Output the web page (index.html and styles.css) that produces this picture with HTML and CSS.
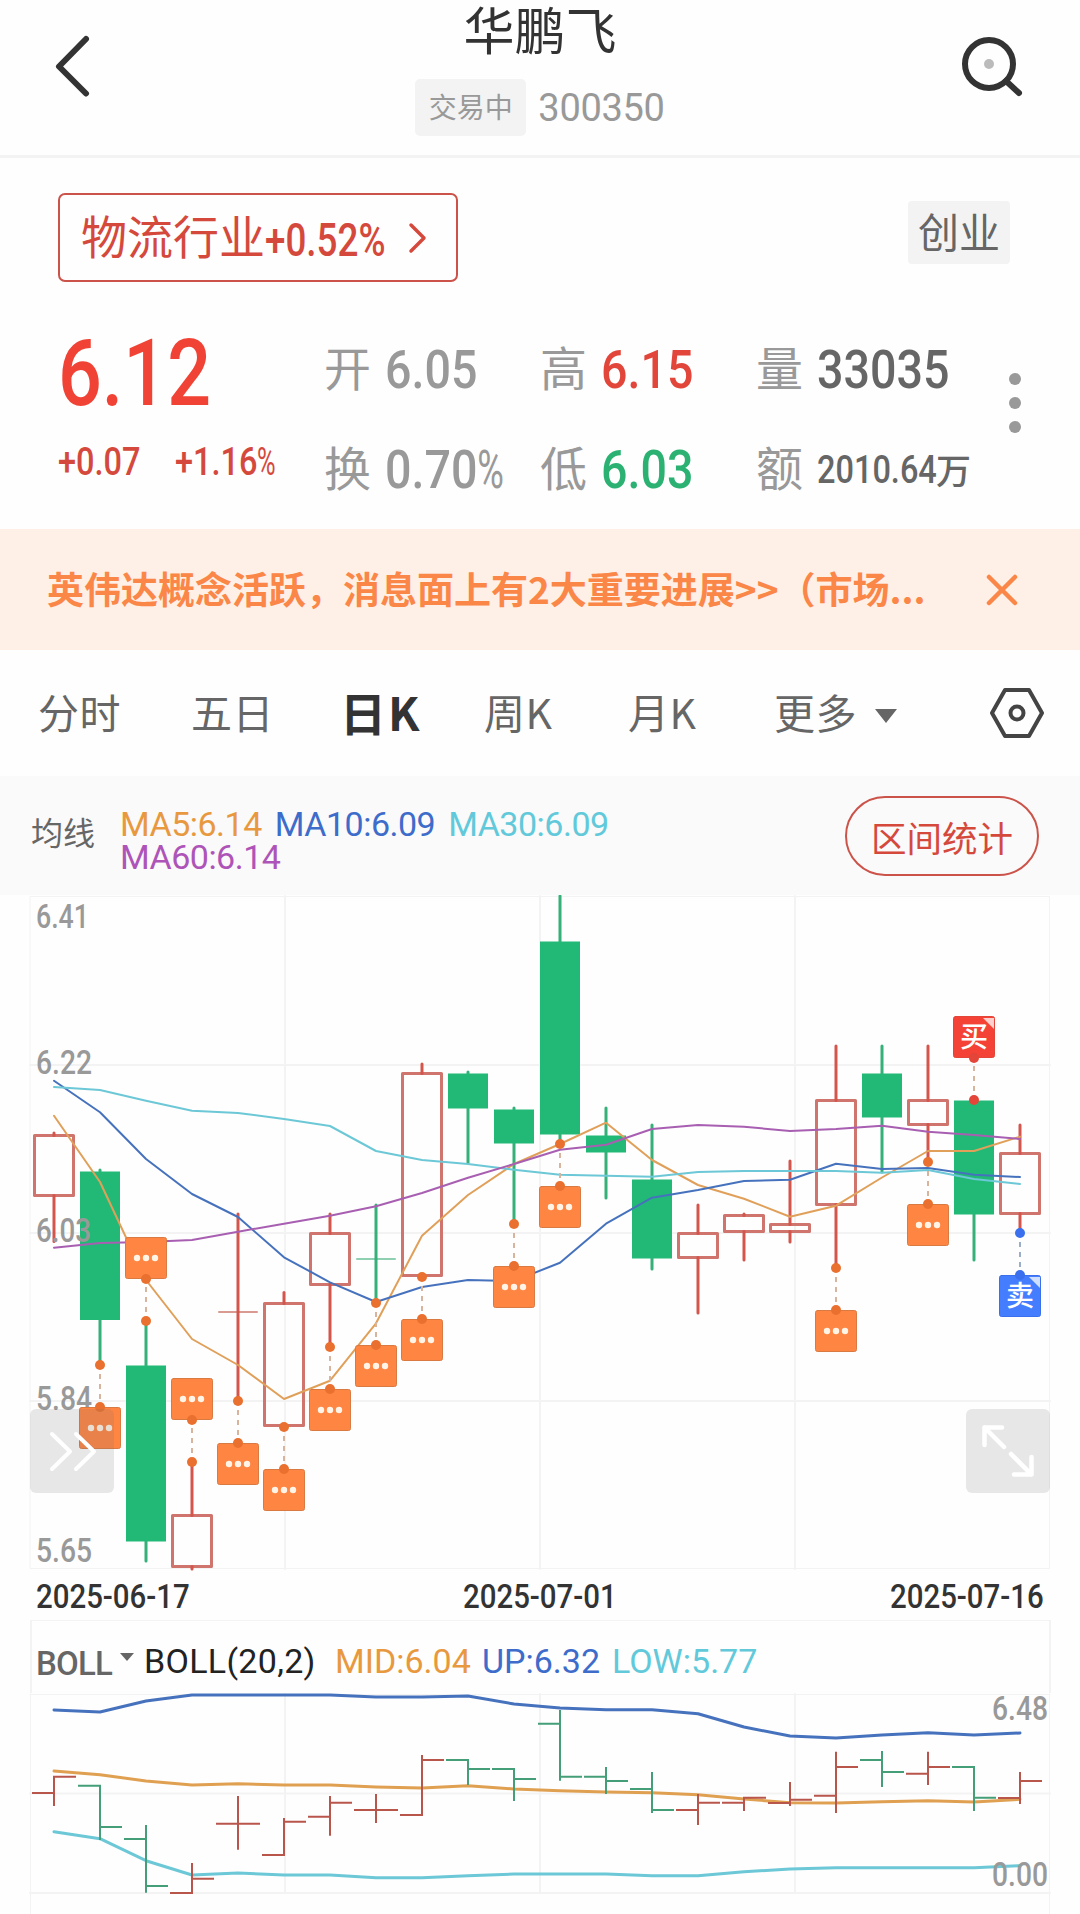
FILE: index.html
```html
<!DOCTYPE html>
<html lang="zh-CN">
<head>
    <meta charset="UTF-8">
    <meta name="viewport" content="width=device-width, initial-scale=1.0">
    <title>华鹏飞 300350</title>
    <link rel="stylesheet" href="styles.css">
</head>
<body>
<header class="header">
    <svg class="back" width="44" height="66" viewBox="0 0 44 66"><path d="M36 8 L9 35.5 L36 62.500"/></svg>
    <div class="title">
        <h1>华鹏飞</h1>
        <div class="sub"><span class="status">交易中</span><span class="code">300350</span></div>
    </div>
    <svg class="search" width="66" height="66" viewBox="0 0 66 66">
        <circle class="ring" cx="29" cy="33" r="24"/>
        <circle class="dot" cx="29" cy="33" r="5"/>
        <path d="M46 50 L59 62"/>
    </svg>
</header>

<section class="quote">
    <div class="tags">
        <a class="industry">
            <span>物流行业</span><span class="num">+0.52%</span>
            <svg width="20" height="32" viewBox="0 0 20 32"><path d="M3 3 L16 16 L3 29"/></svg>
        </a>
        <span class="board">创业</span>
    </div>
    <div class="figures">
        <div class="price num">6.12</div>
        <div class="item"><label>开</label><span class="num">6.05</span></div>
        <div class="item"><label>高</label><span class="num up">6.15</span></div>
        <div class="item"><label>量</label><span class="num dark">33035</span></div>
        <div class="change"><span class="num">+0.07</span><span class="num">+1.16<em>%</em></span></div>
        <div class="item"><label>换</label><span class="num">0.70<em>%</em></span></div>
        <div class="item"><label>低</label><span class="num down">6.03</span></div>
        <div class="item"><label>额</label><span class="num dark small">2010.64</span><b>万</b></div>
        <div class="more"><i></i><i></i><i></i></div>
    </div>
</section>

<div class="notice">
    <span>英伟达概念活跃，消息面上有2大重要进展&gt;&gt;（市场...</span>
    <svg width="32" height="32" viewBox="0 0 32 32"><path d="M3 3 L29 29 M29 3 L3 29"/></svg>
</div>

<nav class="tabs">
    <a>分时</a>
    <a>五日</a>
    <a class="active">日K</a>
    <a>周K</a>
    <a>月K</a>
    <a>更多<i class="arrow"></i></a>
    <svg width="58" height="54" viewBox="0 0 58 54">
        <path d="M17 4 H41 L54 27 L41 50 H17 L4 27 Z"/>
        <circle cx="29" cy="27" r="6.5"/>
    </svg>
</nav>

<div class="legend">
    <span class="name">均线</span>
    <div class="mas">
        <span class="ma5">MA5:6.14</span>
        <span class="ma10">MA10:6.09</span>
        <span class="ma30">MA30:6.09</span>
        <span class="ma60">MA60:6.14</span>
    </div>
    <button>区间统计</button>
</div>

<div class="chart">
    <svg id="kline" width="1080" height="676" viewBox="0 895 1080 676"></svg>
    <button class="tool left">
        <svg width="84" height="84" viewBox="0 0 84 84"><path d="M22 25 L40 42.500 L22 60 M46 25 L64 42.500 L46 60"/></svg>
    </button>
    <button class="tool right">
        <svg width="84" height="84" viewBox="0 0 84 84"><path d="M38 38 L18.500 18.500 M36 18.500 H18.500 V36 M45 45 L65.500 65.500 M48 65.500 H65.500 V48"/></svg>
    </button>
</div>
<div class="dates"><span class="num">2025-06-17</span><span class="num">2025-07-01</span><span class="num">2025-07-16</span></div>

<div class="boll">
    <div class="boll-head">
        <span class="pick">BOLL</span><i class="arrow"></i>
        <span class="param">BOLL(20,2)</span>
        <span class="mid">MID:6.04</span>
        <span class="upper">UP:6.32</span>
        <span class="low">LOW:5.77</span>
    </div>
    <svg id="boll" width="1080" height="221" viewBox="0 1693 1080 221"></svg>
</div>
<script src="chart.js"></script>
</body>
</html>
```

FILE: styles.css
```css
* {
    box-sizing: border-box;
}

body {
    margin: 0;
    width: 1080px;
    height: 1914px;
    overflow: hidden;
    background-color: #fefefe;
    font-family: "Noto Sans CJK SC", sans-serif;
    color: #666;
}

svg {
    display: block;
    fill: none;
    stroke-linecap: round;
    stroke-linejoin: round;
}

button {
    font-family: inherit;
    padding: 0;
}

/* narrow digits */
.num {
    display: inline-block;
    font-family: Roboto, sans-serif;
    font-weight: 500;
    transform: scaleX(0.855);
    transform-origin: left center;
    white-space: nowrap;
}

.num em {
    display: inline-block;
    font-style: normal;
    font-weight: 400;
    transform: scaleX(0.78);
    transform-origin: left center;
}

.header {
    height: 158px;
    border-bottom: 3px solid #f3f3f3;
    display: flex;
    justify-content: space-between;
    padding: 31px 54px 0 50px;
    color: #333;
}

.back {
    stroke: #333;
    stroke-width: 6;
}

.search {
    stroke: #333;
    stroke-width: 6;
}

.search .dot {
    fill: #bbb;
    stroke: none;
}

.title {
    margin-top: -31px;
    margin-left: 26px;
}

.title h1 {
    margin: 0;
    padding-top: 1px;
    font-size: 51px;
    font-weight: 400;
    line-height: 54px;
    text-align: center;
}

.sub {
    display: flex;
    align-items: center;
    gap: 12px;
    margin-top: 24px;
    color: #999;
}

.status {
    width: 111px;
    height: 57px;
    line-height: 55px;
    font-size: 28px;
    text-align: center;
    background-color: #f3f3f3;
    border-radius: 5px;
}

.code {
    font-family: Roboto, sans-serif;
    font-size: 38px;
    letter-spacing: -0.3px;
}

.quote {
    height: 371px;
    padding: 35px 70px 0 58px;
}

.tags {
    display: flex;
    justify-content: space-between;
    align-items: flex-start;
}

.industry {
    width: 400px;
    height: 89px;
    padding-left: 21px;
    border: 2px solid #cb5349;
    border-radius: 7px;
    display: flex;
    align-items: center;
    font-size: 46px;
    line-height: 78px;
    color: #d5493d;
}

.industry span:first-child {
    height: 85px;
}

.industry .num {
    width: 143px;
    font-size: 46px;
    transform: scaleX(0.8);
    padding-top: 4px;
}

.industry svg {
    stroke: #d5493d;
    stroke-width: 3.5;
}

.board {
    width: 102px;
    height: 63px;
    margin-top: 8px;
    line-height: 58px;
    font-size: 41px;
    text-align: center;
    background-color: #f3f3f3;
    border-radius: 4px;
}

.figures {
    position: relative;
    display: grid;
    grid-template-columns: 266px 216px 216px 240px;
    grid-template-rows: 98px 102px;
    margin-top: 38px;
    align-items: center;
}

.price {
    padding-top: 10px;
    font-size: 93px;
    line-height: 98px;
    color: #f14335;
    transform: scaleX(0.83);
}

.item {
    display: flex;
    align-items: center;
    font-size: 47px;
    line-height: 60px;
}

.item label {
    width: 61px;
    padding-bottom: 6px;
    color: #999;
}

.item .num {
    font-size: 54.5px;
    color: #999;
}

.item .up {
    color: #e2463a;
}

.item .down {
    color: #2bb273;
}

.item .dark {
    color: #666;
}

.item .small {
    width: 119px;
    padding-top: 2px;
    font-size: 38px;
}

.item b {
    font-size: 35px;
    font-weight: 500;
}

.change {
    display: flex;
    font-size: 38px;
    color: #d5493d;
}

.change span {
    width: 117px;
    margin-top: -15px;
}

.more {
    position: absolute;
    left: 951px;
    top: 53px;
}

.more i {
    display: block;
    width: 12px;
    height: 12px;
    margin-bottom: 12px;
    border-radius: 50%;
    background-color: #999;
}

.notice {
    height: 121px;
    padding: 0 62px 0 47px;
    display: flex;
    justify-content: space-between;
    align-items: center;
    background-color: #fff0e7;
    color: #fa8748;
    font-size: 37px;
    font-weight: 700;
}

.notice span {
    padding-bottom: 3px;
}

.notice svg {
    stroke: #fa8748;
    stroke-width: 4.5;
}

.tabs {
    height: 126px;
    padding: 0 34px 0 38px;
    display: grid;
    grid-template-columns: 153px 149px 144px 144px 146px 1fr auto;
    align-items: center;
    font-size: 41px;
}

.tabs a {
    padding-bottom: 5px;
    letter-spacing: 0.5px;
}

.tabs .active {
    font-size: 46px;
    font-weight: 700;
    letter-spacing: 2px;
    color: #333;
}

.tabs svg {
    stroke: #444;
    stroke-width: 4;
}

.arrow {
    display: inline-block;
    border: 11px solid transparent;
    border-top: 14px solid #666;
    border-bottom: 0;
}

.tabs .arrow {
    margin: 0 0 6px 18px;
}

.legend {
    height: 119px;
    padding: 0 41px 0 31px;
    display: flex;
    background-color: #fafafa;
}

.legend .name {
    width: 89px;
    font-size: 32px;
    line-height: 110px;
}

.mas {
    width: 530px;
    display: flex;
    flex-wrap: wrap;
    align-content: flex-start;
    padding-top: 32px;
    column-gap: 13px;
    font-family: Roboto, sans-serif;
    font-size: 34px;
    line-height: 33px;
    letter-spacing: -0.5px;
}

.ma5, .mid {
    color: #e8993f;
}

.ma10, .upper {
    color: #3d6ccb;
}

.ma30, .low {
    color: #61c9da;
}

.ma60 {
    color: #ae54b8;
}

.legend button {
    width: 194px;
    height: 80px;
    margin: 20px 0 0 auto;
    border: 2px solid #cb5349;
    border-radius: 40px;
    background: none;
    font-size: 35.5px;
    color: #d5493d;
}

.chart {
    position: relative;
    height: 676px;
}

.tool {
    position: absolute;
    top: 514px;
    width: 84px;
    height: 84px;
    border: 0;
    border-radius: 6px;
    background-color: rgba(110, 110, 110, 0.16);
}

.tool.left {
    left: 30px;
}

.tool.right {
    left: 966px;
}

.tool svg {
    stroke: #fff;
    stroke-width: 4.5;
}

.tool.left svg {
    stroke-width: 4;
}

/* svg text */
.scale {
    font-family: Roboto, sans-serif;
    font-size: 34px;
    font-weight: 500;
    fill: #999;
}

.mark {
    font-family: "Noto Sans CJK SC", sans-serif;
    font-size: 28px;
    font-weight: 500;
    fill: #fff;
    text-anchor: middle;
}

.dates {
    display: flex;
    justify-content: space-between;
    width: 1009px;
    height: 49px;
    margin-left: 36px;
    font-size: 32.5px;
    line-height: 53px;
    color: #333;
}

.dates .num {
    width: 155px;
    transform: scaleX(0.905);
}

.boll-head {
    width: 1021px;
    height: 73px;
    margin-left: 30px;
    padding-left: 4px;
    display: flex;
    align-items: center;
    border: 2px solid #f3f3f3;
    border-width: 1px 2px 0;
    font-family: Roboto, sans-serif;
    font-size: 34px;
    white-space: nowrap;
}

.boll-head span {
    padding-top: 8px;
}

.boll-head .pick {
    width: 84px;
    padding-top: 12px;
    font-size: 33px;
    font-weight: 500;
    letter-spacing: -0.8px;
}

.boll-head .arrow {
    border-width: 8px 7px 0;
}

.boll-head .param {
    width: 191px;
    margin-left: 10px;
    letter-spacing: 0.3px;
    color: #222;
}

.boll-head .mid {
    width: 147px;
}

.boll-head .upper {
    width: 130px;
}
```

FILE: chart.js
```javascript
const RED = '#d4554c';
const GREEN = '#22b977';
const ORANGE = '#ff8543';

// candle centre on the x axis
const cx = i => 54 + 46 * i;

// [colour, high, body top, body bottom, low]
const candles = [
    ['r', 1133, 1135.5, 1195.500, 1241.500], ['g', 1170, 1171.500, 1320, 1365], ['g', 1321, 1365.500, 1541.500, 1561],
    ['r', 1462, 1515.500, 1566.500, 1569], ['r', 1214, 1312, 1312, 1401], ['r', 1292.500, 1303.500, 1425.500, 1427],
    ['r', 1214, 1233.500, 1284.500, 1347], ['g', 1205, 1259, 1259, 1303], ['r', 1064, 1073.500, 1275.500, 1277],
    ['g', 1072, 1073.500, 1108.500, 1163], ['g', 1108, 1109.500, 1143.500, 1224], ['g', 896, 941.500, 1134.500, 1144],
    ['g', 1108, 1135.500, 1152.500, 1198], ['g', 1125, 1179.500, 1258.500, 1269], ['r', 1205, 1233.500, 1257.500, 1313],
    ['r', 1214, 1215.500, 1231.500, 1260], ['r', 1161, 1224.500, 1231.500, 1242], ['r', 1046, 1100.500, 1204.500, 1268],
    ['g', 1046, 1073.500, 1117.500, 1172], ['r', 1046, 1100.500, 1124.500, 1162], ['g', 1100, 1100.500, 1214.500, 1260],
    ['r', 1125, 1153.500, 1213.500, 1233]
];

const averages = [
    ['#e0a05a', [1115.7, 1182, 1280, 1339, 1365, 1399, 1380.7, 1323.3, 1235.7, 1195, 1164, 1144, 1122.7, 1160, 1185, 1198.7, 1216.7, 1205.7, 1177.5, 1151, 1151, 1136.7]],
    ['#4672bd', [1080.7, 1112.3, 1159, 1194, 1217, 1257.3, 1282.3, 1302, 1287, 1280, 1281, 1262.7, 1223.7, 1197.7, 1190, 1181, 1179.7, 1163.7, 1169, 1168, 1174.7, 1177]],
    ['#6cc8d6', [1087, 1090, 1100.7, 1110.7, 1113, 1119, 1126, 1151, 1160, 1164, 1169.7, 1174.7, 1175.7, 1176.7, 1172, 1171, 1171, 1171, 1172.7, 1170, 1179, 1184]],
    ['#a85fb2', [1247.7, 1243, 1242, 1240, 1231.7, 1223.7, 1215.7, 1206.3, 1193, 1177.7, 1164, 1149.7, 1144.7, 1129, 1125, 1126.7, 1131, 1129, 1125.7, 1131.7, 1135, 1139]]
];

// [candle index, y of the dot at the candle, direction]
const markers = [
    [1, 1365, 1], [2, 1321, -1], [3, 1462, -1], [4, 1401, 1], [5, 1427, 1], [6, 1347, 1], [7, 1303, 1],
    [8, 1277, 1], [10, 1224, 1], [11, 1144, 1], [17, 1268, 1], [19, 1162, 1],
    [20, 1100, -1, '买', '#f44336', '#e34539'], [21, 1233, 1, '卖', '#447eff', '#3a70ee']
];

function line(x1, y1, x2, y2, color, width, extra) {
    return `<line x1="${x1}" y1="${y1}" x2="${x2}" y2="${y2}" stroke="${color}" stroke-width="${width}" ${extra || ''}/>`;
}

function curve(points, color, width) {
    return `<polyline points="${points.map((y, i) => cx(i) + ',' + y).join(' ')}" stroke="${color}" stroke-width="${width}"/>`;
}

function label(text, x, y, width) {
    return `<text class="scale" x="${x}" y="${y}" textLength="${width}" lengthAdjust="spacingAndGlyphs">${text}</text>`;
}

function drawKline() {
    let out = '<rect x="30.5" y="896.500" width="1019" height="672" stroke="#f3f3f3"/>';
    [1065, 1233, 1401].forEach(y => out += line(30, y, 1050, y, '#f3f3f3', 2));
    [285, 540, 795].forEach(x => out += line(x, 896, x, 1569, '#f3f3f3', 2));

    candles.forEach(([type, high, top, bottom, low], i) => {
        const x = cx(i);
        if (top === bottom) {
            out += line(x - 19, top, x + 19, top, type === 'r' ? '#d99a92' : '#8fcfb2', 2);
            out += line(x, high, x, low, type === 'r' ? RED : '#35b079', 3);
        } else if (type === 'r') {
            out += `<rect x="${x - 19.5}" y="${top}" width="39" height="${bottom - top}" stroke="#cf756d" stroke-width="3"/>`;
            out += line(x, high, x, top, RED, 3) + line(x, bottom, x, low, RED, 3);
        } else {
            out += line(x, high, x, low, '#35b079', 3);
            out += `<rect x="${x - 20}" y="${top}" width="40" height="${bottom - top}" fill="${GREEN}"/>`;
        }
    });

    averages.forEach(([color, points]) => out += curve(points, color, 2));

    out += label('6.41', 36, 928, 53) + label('6.22', 36, 1074, 56) + label('6.03', 36, 1242, 55);
    out += label('5.84', 36, 1410, 56) + label('5.65', 36, 1562, 56);

    markers.forEach(([i, y, dir, text, fill, dot]) => {
        const x = cx(i);
        const end = y + 42 * dir;
        const boxTop = dir > 0 ? end : end - 42;
        const dotColor = dot || '#e9702e';
        out += line(x, y + 9 * dir, x, end, text === '卖' ? '#9aaecb' : '#d9b49c', 2, 'stroke-dasharray="5 5" stroke-linecap="butt"');
        out += `<rect x="${x - 20.5}" y="${boxTop + 0.5}" width="41" height="41" rx="2" fill="${fill || ORANGE}" stroke="${text ? dot : '#d97a42'}"/>`;
        out += `<circle cx="${x}" cy="${y}" r="5" fill="${dotColor}"/><circle cx="${x}" cy="${end}" r="5" fill="${dotColor}"/>`;
        if (text) {
            out += `<text class="mark" x="${x}" y="${boxTop + 31}">${text}</text>`;
            out += `<path d="M${x + 9} ${boxTop + 2} H${x + 20} V${boxTop + 13} Z" fill="#fff" fill-opacity="0.750"/>`;
        } else {
            [-9, 0, 9].forEach(d => out += `<circle cx="${x + d}" cy="${boxTop + 21}" r="3.2" fill="#fff4e6"/>`);
        }
    });
    document.getElementById('kline').innerHTML = out;
}

// [colour, high, open, close, low]
const bars = [
    ['r', 1776.7, 1793, 1776.7, 1805], ['g', 1785.7, 1785.7, 1827, 1839], ['g', 1826, 1839, 1886, 1891.7],
    ['r', 1864, 1893, 1878.7, 1893], ['r', 1797, 1823.7, 1823.7, 1848.7], ['r', 1819, 1855, 1821.7, 1855],
    ['r', 1797, 1816.7, 1802.7, 1834.7], ['r', 1795, 1810, 1810, 1822], ['r', 1756, 1815, 1760, 1815],
    ['g', 1760, 1760, 1769, 1784], ['g', 1769, 1769, 1779, 1800], ['g', 1711, 1723.7, 1776.7, 1779.7],
    ['g', 1768, 1776.7, 1781, 1793], ['g', 1773, 1789, 1810, 1812], ['r', 1795, 1810, 1802.7, 1824],
    ['r', 1797.7, 1802.7, 1797.7, 1810], ['r', 1783, 1803, 1799.7, 1805], ['r', 1752.7, 1795.7, 1767, 1812],
    ['g', 1752, 1760, 1772, 1786], ['r', 1752.7, 1773.7, 1767, 1784], ['g', 1767, 1767, 1797.7, 1810],
    ['r', 1773, 1798, 1781, 1803]
];

const bands = [
    ['#4672bd', [1710, 1712, 1701, 1695, 1695, 1695, 1695, 1697, 1697, 1696, 1704, 1708, 1709.7, 1709.7, 1713.7, 1727, 1736, 1738, 1735, 1732.7, 1735, 1733]],
    ['#e0a052', [1771, 1774.7, 1781, 1785, 1783.7, 1785, 1785, 1787, 1788, 1785.7, 1789, 1790.7, 1792, 1792.7, 1794.7, 1799, 1802.7, 1803, 1801.7, 1800.7, 1802, 1799.3]],
    ['#6cc8d6', [1831.7, 1838.7, 1860.7, 1875, 1873, 1875, 1875, 1877.7, 1877.7, 1875.7, 1874, 1874, 1874, 1875.7, 1875.7, 1871.7, 1869, 1867.7, 1867.7, 1867.7, 1867.7, 1865.7]]
];

function drawBoll() {
    let out = line(30, 1694.5, 1050, 1694.5, '#f3f3f3', 1) + line(30, 1793.5, 1050, 1793.5, '#f3f3f3', 2) + line(30, 1893, 1050, 1893, '#f3f3f3', 2);
    [30.5, 1049.5].forEach(x => out += line(x, 1694, x, 1914, '#f3f3f3', 1));
    [285, 540, 795].forEach(x => out += line(x, 1694, x, 1893, '#f3f3f3', 2));
    bands.forEach(([color, points]) => out += curve(points, color, 3));
    bars.forEach(([type, high, open, close, low], i) => {
        const x = cx(i);
        const color = type === 'r' ? '#b9564c' : '#449f78';
        out += `<path d="M${x - 21} ${open} H${x} M${x} ${high} V${low} M${x} ${close} H${x + 21}" stroke="${color}" stroke-width="2" stroke-linecap="square"/>`;
    });
    out += label('6.48', 992, 1720, 56) + label('0.00', 992, 1886, 56);
    document.getElementById('boll').innerHTML = out;
}

drawKline();
drawBoll();
```
